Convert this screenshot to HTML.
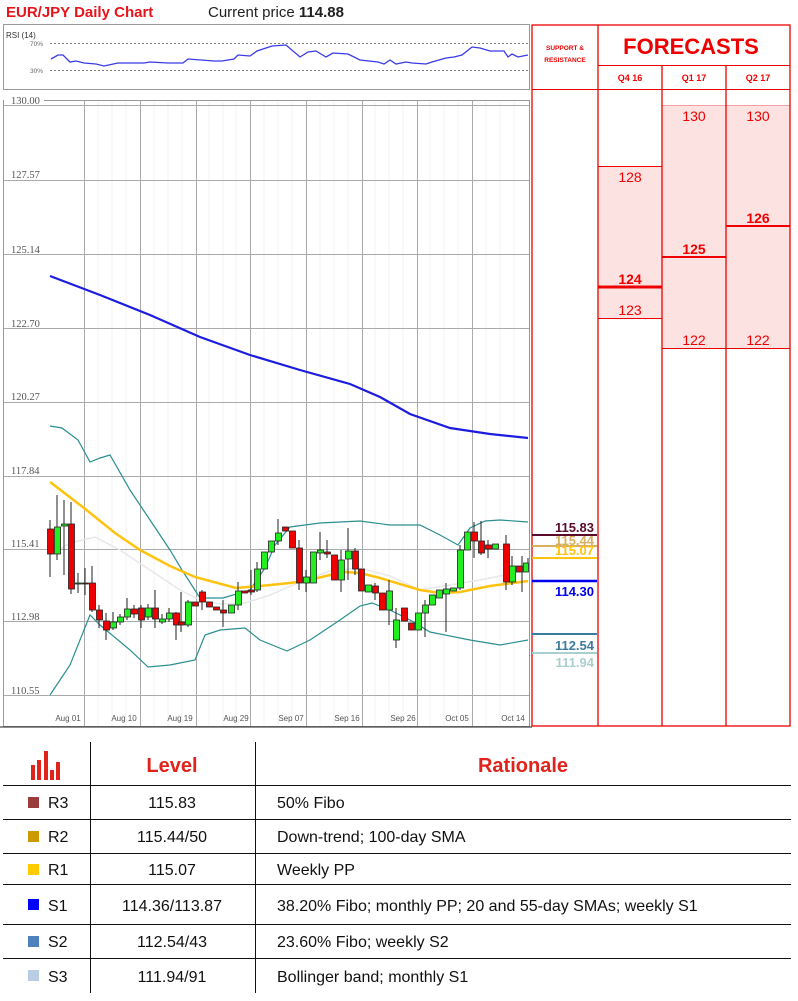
<!DOCTYPE html>
<html><head><meta charset="utf-8"><style>
body{margin:0;background:#fff;width:798px;height:996px;overflow:hidden;font-family:"Liberation Sans",sans-serif}
svg text{font-family:"Liberation Sans",sans-serif}
svg text.sf{font-family:"Liberation Serif",serif}
</style></head><body>
<svg width="798" height="996" viewBox="0 0 798 996" xmlns="http://www.w3.org/2000/svg">
<text x="6" y="17" font-size="15" font-weight="bold" fill="#e8141c">EUR/JPY Daily Chart</text>
<text x="208" y="17" font-size="15" fill="#222">Current price <tspan font-weight="bold">114.88</tspan></text>
<rect x="3.5" y="24.5" width="526" height="65" fill="#fff" stroke="#999"/>
<text x="6" y="38" font-size="8" fill="#333">RSI (14)</text>
<text x="30" y="46" font-size="6.5" fill="#666">70%</text>
<text x="30" y="73" font-size="6.5" fill="#666">30%</text>
<line x1="50" y1="43.5" x2="528" y2="43.5" stroke="#555" stroke-dasharray="2,2" stroke-width="0.8"/>
<line x1="50" y1="70.5" x2="528" y2="70.5" stroke="#555" stroke-dasharray="2,2" stroke-width="0.8"/>
<polyline fill="none" stroke="#3a3ae8" stroke-width="1.3" points="51,59 58,55 63,55 70,62 76,61 84,63 96,64 104,66 118,63 144,63 150,62 168,63 183,63 188,59 214,61 222,61 234,59 238,55 250,56 257,51 266,48 272,46 286,45 300,57 308,52 316,51 326,57 333,53 348,54 360,60 378,62 384,64 390,60 396,64 406,62 412,63 426,64 432,62 446,58 454,57 462,55 472,47 480,48 490,51 504,51 508,57 512,54 518,57 528,55"/>
<rect x="3.5" y="100.5" width="526" height="626" fill="#fff" stroke="#999"/>
<g stroke="#f3f3f3" stroke-width="1">
<line x1="98" y1="101" x2="98" y2="726"/><line x1="112" y1="101" x2="112" y2="726"/><line x1="126" y1="101" x2="126" y2="726"/><line x1="154" y1="101" x2="154" y2="726"/><line x1="168" y1="101" x2="168" y2="726"/><line x1="182" y1="101" x2="182" y2="726"/><line x1="209" y1="101" x2="209" y2="726"/><line x1="223" y1="101" x2="223" y2="726"/><line x1="236" y1="101" x2="236" y2="726"/><line x1="264" y1="101" x2="264" y2="726"/><line x1="278" y1="101" x2="278" y2="726"/><line x1="292" y1="101" x2="292" y2="726"/><line x1="320" y1="101" x2="320" y2="726"/><line x1="334" y1="101" x2="334" y2="726"/><line x1="348" y1="101" x2="348" y2="726"/><line x1="375" y1="101" x2="375" y2="726"/><line x1="389" y1="101" x2="389" y2="726"/><line x1="403" y1="101" x2="403" y2="726"/><line x1="430" y1="101" x2="430" y2="726"/><line x1="444" y1="101" x2="444" y2="726"/><line x1="458" y1="101" x2="458" y2="726"/><line x1="486" y1="101" x2="486" y2="726"/><line x1="500" y1="101" x2="500" y2="726"/><line x1="514" y1="101" x2="514" y2="726"/>
</g>
<g stroke="#aaa" stroke-width="1">
<line x1="84.5" y1="101" x2="84.5" y2="726"/><line x1="140.5" y1="101" x2="140.5" y2="726"/><line x1="196.5" y1="101" x2="196.5" y2="726"/><line x1="250.5" y1="101" x2="250.5" y2="726"/><line x1="306.5" y1="101" x2="306.5" y2="726"/><line x1="362.5" y1="101" x2="362.5" y2="726"/><line x1="417.5" y1="101" x2="417.5" y2="726"/><line x1="472.5" y1="101" x2="472.5" y2="726"/>
<line x1="4" y1="105.5" x2="529" y2="105.5"/><line x1="4" y1="180.5" x2="529" y2="180.5"/><line x1="4" y1="254.5" x2="529" y2="254.5"/><line x1="4" y1="328.5" x2="529" y2="328.5"/><line x1="4" y1="402.5" x2="529" y2="402.5"/><line x1="4" y1="476.5" x2="529" y2="476.5"/><line x1="4" y1="549.5" x2="529" y2="549.5"/><line x1="4" y1="621.5" x2="529" y2="621.5"/><line x1="4" y1="695.5" x2="529" y2="695.5"/>
</g>
<rect x="4" y="96" width="40" height="7" fill="#fff"/>
<g font-size="10.5" fill="#555">
<text class="sf" x="11" y="104">130.00</text>
<text class="sf" x="11" y="178">127.57</text>
<text class="sf" x="11" y="253">125.14</text>
<text class="sf" x="11" y="327">122.70</text>
<text class="sf" x="11" y="400">120.27</text>
<text class="sf" x="11" y="474">117.84</text>
<text class="sf" x="11" y="547">115.41</text>
<text class="sf" x="11" y="620">112.98</text>
<text class="sf" x="11" y="694">110.55</text>
</g>
<g font-size="8" fill="#555" text-anchor="middle">
<text x="68" y="721">Aug 01</text><text x="124" y="721">Aug 10</text><text x="180" y="721">Aug 19</text><text x="236" y="721">Aug 29</text><text x="291" y="721">Sep 07</text><text x="347" y="721">Sep 16</text><text x="403" y="721">Sep 26</text><text x="457" y="721">Oct 05</text><text x="513" y="721">Oct 14</text>
</g>
<polyline fill="none" stroke="#1c1ce0" stroke-width="2.2" points="50,276 100,295 150,315 200,337 250,355 300,370 350,384 380,397 410,414 450,428 490,434 528,438"/>
<polyline fill="none" stroke="#e8e8e8" stroke-width="1.5" points="50,555 70,543 95,537 120,550 150,570 180,590 200,600 220,604 245,603 270,595 300,582 330,571 360,568 390,576 420,590 450,585 480,580 510,574 528,570"/>
<polyline fill="none" stroke="#2a8f90" stroke-width="1.2" points="50,426 62,428 78,440 90,462 100,458 110,455 130,490 150,520 170,550 182,570 200,598 223,598 250,590 265,568 275,545 290,527 320,523 360,521 390,525 420,525 440,535 458,545 470,528 485,521 500,520 528,522"/>
<polyline fill="none" stroke="#2a8f90" stroke-width="1.2" points="50,695 70,665 90,615 100,625 130,650 148,667 170,665 195,660 205,635 220,630 245,628 260,640 287,651 310,640 340,620 360,606 372,603 390,610 410,620 430,632 470,640 500,645 528,640"/>
<polyline fill="none" stroke="#ffc20e" stroke-width="2.5" points="50,482 84,508 115,533 140,550 170,566 195,577 236,588 260,586 290,583 305,581 330,575 345,572 360,573 380,578 420,590 440,593 460,592 490,586 528,581"/>
<g stroke="#222" stroke-width="1">
<line x1="50" y1="520" x2="50" y2="577"/><line x1="57" y1="495" x2="57" y2="560"/><line x1="64" y1="500" x2="64" y2="575"/><line x1="71" y1="502" x2="71" y2="594"/><line x1="78" y1="573" x2="78" y2="593"/><line x1="85" y1="568" x2="85" y2="595"/><line x1="92" y1="566" x2="92" y2="612"/><line x1="99" y1="605" x2="99" y2="628"/><line x1="106" y1="613" x2="106" y2="640"/><line x1="113" y1="612" x2="113" y2="630"/><line x1="120" y1="614" x2="120" y2="625"/><line x1="127" y1="598" x2="127" y2="620"/><line x1="134" y1="605" x2="134" y2="618"/><line x1="141" y1="605" x2="141" y2="628"/><line x1="148" y1="604" x2="148" y2="620"/><line x1="155" y1="590" x2="155" y2="628"/><line x1="162" y1="614" x2="162" y2="624"/><line x1="169" y1="608" x2="169" y2="622"/><line x1="176" y1="612" x2="176" y2="640"/><line x1="181" y1="592" x2="181" y2="632"/><line x1="188" y1="600" x2="188" y2="627"/><line x1="202" y1="590" x2="202" y2="610"/><line x1="223" y1="600" x2="223" y2="627"/><line x1="238" y1="582" x2="238" y2="610"/><line x1="251" y1="570" x2="251" y2="595"/><line x1="257" y1="562" x2="257" y2="592"/><line x1="278" y1="519" x2="278" y2="545"/><line x1="299" y1="540" x2="299" y2="590"/><line x1="306" y1="570" x2="306" y2="592"/><line x1="320" y1="532" x2="320" y2="560"/><line x1="327" y1="540" x2="327" y2="558"/><line x1="341" y1="550" x2="341" y2="592"/><line x1="348" y1="528" x2="348" y2="580"/><line x1="355" y1="548" x2="355" y2="575"/><line x1="375" y1="583" x2="375" y2="600"/><line x1="389" y1="580" x2="389" y2="625"/><line x1="396" y1="608" x2="396" y2="648"/><line x1="425" y1="600" x2="425" y2="637"/><line x1="446" y1="583" x2="446" y2="632"/><line x1="460" y1="545" x2="460" y2="590"/><line x1="474" y1="522" x2="474" y2="558"/><line x1="481" y1="521" x2="481" y2="555"/><line x1="488" y1="540" x2="488" y2="558"/><line x1="506" y1="535" x2="506" y2="590"/><line x1="512" y1="556" x2="512" y2="585"/><line x1="522" y1="556" x2="522" y2="592"/><line x1="528" y1="558" x2="528" y2="572"/>
</g>
<g stroke="#222" stroke-width="0.8">
<rect x="47.5" y="529" width="6" height="25" fill="#e00"/><rect x="54.5" y="527" width="6" height="27" fill="#2e2"/><rect x="61.5" y="524" width="6" height="2" fill="#2e2"/><rect x="68.5" y="524" width="6" height="65" fill="#e00"/><rect x="75.5" y="583" width="6" height="1" fill="#2e2"/><rect x="82.5" y="583" width="6" height="1" fill="#e00"/><rect x="89.5" y="583" width="6" height="27" fill="#e00"/><rect x="96.5" y="610" width="6" height="10" fill="#e00"/><rect x="103.5" y="621" width="6" height="9" fill="#e00"/><rect x="110.5" y="622" width="6" height="6" fill="#2e2"/><rect x="117.5" y="617" width="6" height="5" fill="#2e2"/><rect x="124.5" y="609" width="6" height="8" fill="#2e2"/><rect x="131.5" y="609" width="6" height="5" fill="#e00"/><rect x="138.5" y="608" width="6" height="12" fill="#e00"/><rect x="145.5" y="608" width="6" height="9" fill="#2e2"/><rect x="152.5" y="608" width="6" height="11" fill="#e00"/><rect x="159.5" y="619" width="6" height="3" fill="#2e2"/><rect x="166.5" y="613" width="6" height="6" fill="#2e2"/><rect x="173.5" y="613" width="6" height="12" fill="#e00"/><rect x="178.5" y="622" width="6" height="3" fill="#e00"/><rect x="185.5" y="602" width="6" height="23" fill="#2e2"/><rect x="192.5" y="602" width="6" height="4" fill="#e00"/><rect x="199.5" y="592" width="6" height="10" fill="#e00"/><rect x="206.5" y="602" width="6" height="5" fill="#e00"/><rect x="213.5" y="607" width="6" height="3" fill="#e00"/><rect x="220.5" y="610" width="6" height="3" fill="#e00"/><rect x="228.5" y="605" width="6" height="8" fill="#2e2"/><rect x="235.5" y="591" width="6" height="14" fill="#2e2"/><rect x="241.5" y="591" width="6" height="2" fill="#e00"/><rect x="248.5" y="590" width="6" height="2" fill="#e00"/><rect x="254.5" y="569" width="6" height="21" fill="#2e2"/><rect x="261.5" y="552" width="6" height="17" fill="#2e2"/><rect x="268.5" y="541" width="6" height="11" fill="#2e2"/><rect x="275.5" y="533" width="6" height="8" fill="#2e2"/><rect x="282.5" y="527" width="6" height="4" fill="#e00"/><rect x="289.5" y="531" width="6" height="17" fill="#e00"/><rect x="296.5" y="548" width="6" height="35" fill="#e00"/><rect x="303.5" y="577" width="6" height="6" fill="#2e2"/><rect x="310.5" y="552" width="6" height="31" fill="#2e2"/><rect x="317.5" y="550" width="6" height="3" fill="#2e2"/><rect x="324.5" y="552" width="6" height="2" fill="#e00"/><rect x="331.5" y="555" width="6" height="25" fill="#e00"/><rect x="338.5" y="560" width="6" height="20" fill="#2e2"/><rect x="345.5" y="551" width="6" height="8" fill="#2e2"/><rect x="352.5" y="551" width="6" height="18" fill="#e00"/><rect x="358.5" y="569" width="6" height="22" fill="#e00"/><rect x="365.5" y="585" width="6" height="7" fill="#2e2"/><rect x="372.5" y="586" width="6" height="7" fill="#e00"/><rect x="379.5" y="593" width="6" height="17" fill="#e00"/><rect x="386.5" y="591" width="6" height="19" fill="#2e2"/><rect x="393.5" y="620" width="6" height="20" fill="#2e2"/><rect x="401.5" y="608" width="6" height="13" fill="#e00"/><rect x="408.5" y="623" width="6" height="7" fill="#e00"/><rect x="415.5" y="613" width="6" height="17" fill="#2e2"/><rect x="422.5" y="605" width="6" height="8" fill="#2e2"/><rect x="429.5" y="595" width="6" height="10" fill="#2e2"/><rect x="436.5" y="590" width="6" height="8" fill="#2e2"/><rect x="443.5" y="589" width="6" height="5" fill="#2e2"/><rect x="450.5" y="588" width="6" height="3" fill="#2e2"/><rect x="457.5" y="550" width="6" height="38" fill="#2e2"/><rect x="464.5" y="532" width="6" height="18" fill="#2e2"/><rect x="471.5" y="532" width="6" height="9" fill="#e00"/><rect x="478.5" y="541" width="6" height="12" fill="#e00"/><rect x="485.5" y="545" width="6" height="4" fill="#e00"/><rect x="492.5" y="544" width="6" height="5" fill="#2e2"/><rect x="503.5" y="544" width="6" height="38" fill="#e00"/><rect x="509.5" y="566" width="6" height="16" fill="#2e2"/><rect x="516.5" y="566" width="6" height="6" fill="#e00"/><rect x="523.5" y="563" width="5" height="9" fill="#2e2"/>
</g>
<rect x="598" y="166" width="64" height="152" fill="#fde2e2"/>
<rect x="662" y="105" width="64" height="243" fill="#fde2e2"/>
<rect x="726" y="105" width="64" height="243" fill="#fde2e2"/>
<g stroke="#e00" stroke-width="1">
<line x1="598" y1="166.5" x2="662" y2="166.5"/><line x1="598" y1="318.5" x2="662" y2="318.5"/>
<line x1="662" y1="348.5" x2="790" y2="348.5"/>
<line x1="532" y1="89.5" x2="790" y2="89.5"/>
<line x1="598" y1="65.5" x2="790" y2="65.5"/>
</g>
<g stroke="#f06060" stroke-width="0.6"><line x1="662" y1="105.5" x2="790" y2="105.5"/></g>
<line x1="598" y1="287" x2="662" y2="287" stroke="#e00" stroke-width="3"/>
<line x1="662" y1="257" x2="726" y2="257" stroke="#e00" stroke-width="2"/>
<line x1="726" y1="226" x2="790" y2="226" stroke="#e00" stroke-width="2"/>
<g stroke="#e00" stroke-width="1.3" fill="none">
<rect x="532" y="25" width="258" height="701"/>
<line x1="598" y1="25" x2="598" y2="726"/><line x1="662" y1="65" x2="662" y2="726"/><line x1="726" y1="65" x2="726" y2="726"/>
</g>
<line x1="0" y1="727" x2="532" y2="727" stroke="#222" stroke-width="1"/>
<text x="565" y="50" font-size="6.5" font-weight="bold" fill="#e00" text-anchor="middle">SUPPORT &amp;</text>
<text x="565" y="62" font-size="6.5" font-weight="bold" fill="#e00" text-anchor="middle">RESISTANCE</text>
<text x="691" y="54" font-size="22" font-weight="bold" fill="#e00" text-anchor="middle">FORECASTS</text>
<g font-size="9" font-weight="bold" fill="#e00" text-anchor="middle">
<text x="630" y="81">Q4 16</text><text x="694" y="81">Q1 17</text><text x="758" y="81">Q2 17</text>
</g>
<g font-size="14" fill="#e00" text-anchor="middle">
<text x="694" y="121">130</text><text x="758" y="121">130</text>
<text x="630" y="182">128</text>
<text x="630" y="284" font-weight="bold">124</text>
<text x="630" y="315">123</text>
<text x="694" y="254" font-weight="bold">125</text>
<text x="758" y="223" font-weight="bold">126</text>
<text x="694" y="345">122</text><text x="758" y="345">122</text>
</g>
<line x1="532" y1="535" x2="597" y2="535" stroke="#5a0a2a" stroke-width="2"/>
<line x1="532" y1="546" x2="597" y2="546" stroke="#d8b060" stroke-width="2"/>
<line x1="532" y1="558" x2="597" y2="558" stroke="#ffc20e" stroke-width="2"/>
<line x1="532" y1="581" x2="597" y2="581" stroke="#0000ee" stroke-width="2.5"/>
<line x1="532" y1="634" x2="597" y2="634" stroke="#3d7aa0" stroke-width="2"/>
<line x1="532" y1="653" x2="597" y2="653" stroke="#a9d0d0" stroke-width="2"/>
<g font-size="13" font-weight="bold" text-anchor="end">
<text x="594" y="532" fill="#5a0a2a">115.83</text>
<text x="594" y="545" fill="#d8b060">115.44</text>
<text x="594" y="555" fill="#ffc20e">115.07</text>
<text x="594" y="596" fill="#0000ee">114.30</text>
<text x="594" y="650" fill="#3d7aa0">112.54</text>
<text x="594" y="667" fill="#a9d0d0">111.94</text>
</g>
<g fill="#e0241c">
<rect x="31" y="765" width="4" height="15"/><rect x="37" y="760" width="4" height="20"/><rect x="44" y="751" width="4" height="29"/><rect x="50" y="770" width="4" height="10"/><rect x="56" y="762" width="4" height="18"/>
</g>
<g stroke="#111" stroke-width="1">
<line x1="90.5" y1="742" x2="90.5" y2="993"/><line x1="255.5" y1="742" x2="255.5" y2="993"/>
<line x1="3" y1="785.5" x2="791" y2="785.5"/><line x1="3" y1="819.5" x2="791" y2="819.5"/><line x1="3" y1="853.5" x2="791" y2="853.5"/><line x1="3" y1="884.5" x2="791" y2="884.5"/><line x1="3" y1="924.5" x2="791" y2="924.5"/><line x1="3" y1="958.5" x2="791" y2="958.5"/>
</g>
<text x="172" y="772" font-size="20" font-weight="bold" fill="#e0241c" text-anchor="middle">Level</text>
<text x="523" y="772" font-size="20" font-weight="bold" fill="#e0241c" text-anchor="middle">Rationale</text>
<rect x="28" y="797" width="11" height="11" fill="#9b3c3c"/>
<rect x="28" y="831" width="11" height="11" fill="#cc9900"/>
<rect x="28" y="864" width="11" height="11" fill="#ffcc00"/>
<rect x="28" y="899" width="11" height="11" fill="#0000ff"/>
<rect x="28" y="936" width="11" height="11" fill="#4f81bd"/>
<rect x="28" y="970" width="11" height="11" fill="#b9cde5"/>
<g font-size="16" fill="#111">
<text x="48" y="808">R3</text><text x="48" y="842">R2</text><text x="48" y="875">R1</text><text x="48" y="911">S1</text><text x="48" y="947">S2</text><text x="48" y="982">S3</text>
<g text-anchor="middle">
<text x="172" y="808">115.83</text><text x="172" y="842">115.44/50</text><text x="172" y="875">115.07</text><text x="172" y="911">114.36/113.87</text><text x="172" y="947">112.54/43</text><text x="172" y="982">111.94/91</text>
</g>
<text x="277" y="808">50% Fibo</text><text x="277" y="842">Down-trend; 100-day SMA</text><text x="277" y="875">Weekly PP</text><text x="277" y="911">38.20% Fibo; monthly PP; 20 and 55-day SMAs; weekly S1</text><text x="277" y="947">23.60% Fibo; weekly S2</text><text x="277" y="982">Bollinger band; monthly S1</text>
</g>
</svg>
</body></html>
